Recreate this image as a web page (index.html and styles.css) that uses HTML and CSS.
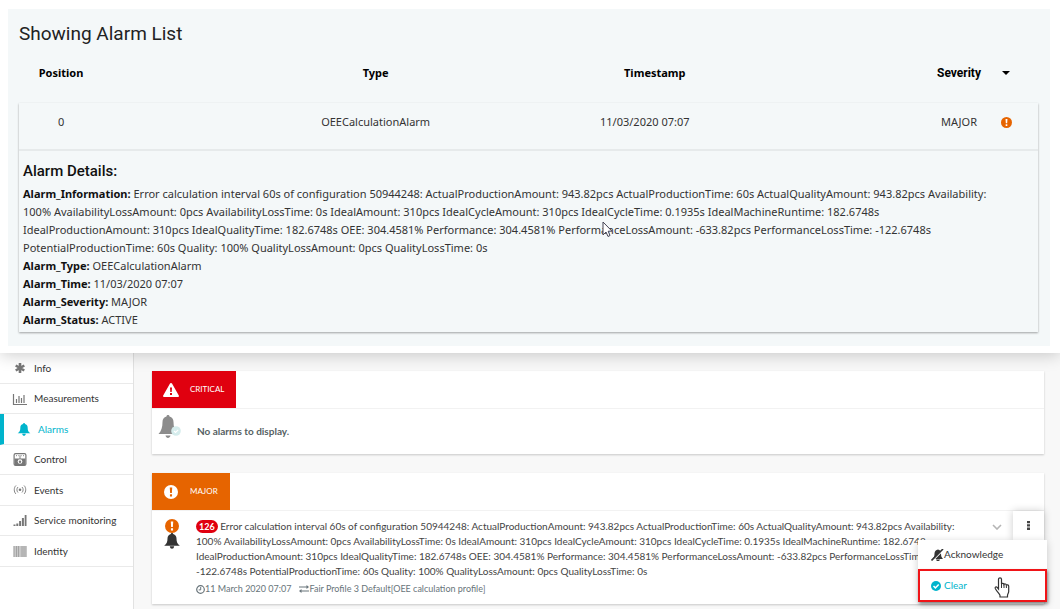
FILE: index.html
```html
<!DOCTYPE html>
<html lang="en">
<head>
<meta charset="utf-8">
<title>Alarms</title>
<link rel="stylesheet" href="styles.css">
</head>
<body>
<svg class="defs" aria-hidden="true">
  <defs>
    <symbol id="bell" viewBox="0 0 16 16"><path d="M8 0c.7 0 1.200.5 1.200 1.100 2.200.6 3.300 2.300 3.300 4.400 0 3.500.8 5.200 3.300 7.200H.2c2.500-2 3.300-3.700 3.300-7.200 0-2.100 1.100-3.800 3.300-4.400C6.800.5 7.300 0 8 0zM5.800 13.200h4.400c-.2 1.700-1.100 2.500-2.200 2.500s-2-.8-2.200-2.500z" fill="currentColor"/></symbol>
    <symbol id="alert" viewBox="0 0 16 16"><circle cx="8" cy="8" r="8" fill="currentColor"/><path d="M6.600 2.800h2.800L9 9.200H7zM6.800 10.600h2.400v2.400H6.800z" fill="var(--mark)"/></symbol>
  </defs>
</svg>

<section class="overlay">
  <div class="panel">
    <h1>Showing Alarm List</h1>
    <table>
      <thead>
        <tr>
          <th class="position">Position</th>
          <th class="type">Type</th>
          <th class="time">Timestamp</th>
          <th class="severity"><span class="sev"><span class="sev-text">Severity</span><span class="sev-icon"><svg width="8" height="4" viewBox="0 0 8 4"><path d="M0 0h8L4 4z"/></svg></span></span></th>
        </tr>
      </thead>
      <tbody>
        <tr class="summary">
          <td class="position">0</td>
          <td>OEECalculationAlarm</td>
          <td class="time">11/03/2020 07:07</td>
          <td class="severity"><span class="sev"><span class="sev-text">MAJOR</span><span class="sev-icon orange"><svg width="11" height="11"><use href="#alert"/></svg></span></span></td>
        </tr>
        <tr>
          <td colspan="4" class="details">
            <h2>Alarm Details:</h2>
            <p><b>Alarm_Information:</b> Error calculation interval 60s of configuration 50944248: ActualProductionAmount: 943.82pcs ActualProductionTime: 60s ActualQualityAmount: 943.82pcs Availability: 100% AvailabilityLossAmount: 0pcs AvailabilityLossTime: 0s IdealAmount: 310pcs IdealCycleAmount: 310pcs IdealCycleTime: 0.1935s IdealMachineRuntime: 182.6748s IdealProductionAmount: 310pcs IdealQualityTime: 182.6748s OEE: 304.4581% Performance: 304.4581% PerformanceLossAmount: -633.82pcs PerformanceLossTime: -122.6748s PotentialProductionTime: 60s Quality: 100% QualityLossAmount: 0pcs QualityLossTime: 0s</p>
            <p><b>Alarm_Type:</b> OEECalculationAlarm</p>
            <p><b>Alarm_Time:</b> 11/03/2020 07:07</p>
            <p><b>Alarm_Severity:</b> MAJOR</p>
            <p><b>Alarm_Status:</b> ACTIVE</p>
          </td>
        </tr>
      </tbody>
    </table>
  </div>
  <svg class="arrow-cursor" width="11" height="17" viewBox="0 0 11 17"><path d="M1 1v13l3-3 2 4.500 2-1L6.200 10.200H10z" fill="#fff" stroke="#445" stroke-width="1"/></svg>
</section>

<div class="app">
  <nav>
    <ul>
      <li><a href="#info"><svg width="12" height="12" viewBox="0 0 12 12"><path d="M6 1v10M1.700 3.500l8.600 5M10.300 3.500l-8.600 5" stroke="currentColor" stroke-width="2.600"/></svg><span>Info</span></a></li>
      <li><a href="#measurements"><svg width="14" height="12" viewBox="0 0 14 12"><path d="M.5 1v10.500H14M3.500 10V6M6 10V3M8.500 10V5M11 10V2" stroke="currentColor" fill="none" stroke-width="1.200"/></svg><span>Measurements</span></a></li>
      <li class="active"><a href="#alarms"><svg width="12" height="13"><use href="#bell"/></svg><span>Alarms</span></a></li>
      <li><a href="#control"><svg width="13" height="13" viewBox="0 0 13 13"><rect x=".6" y=".6" width="11.800" height="11.800" rx="1.500" fill="#fff" stroke="currentColor" stroke-width="1.200"/><path d="M1 5.500h11V12H1z" fill="currentColor"/><path d="M3 2.200v1M5.300 2.200v1M7.700 2.200v1M10 2.200v1M6.500 2.500v4" stroke="currentColor" stroke-width=".9"/><circle cx="6.500" cy="8.500" r="2.300" fill="#fff"/><circle cx="6.500" cy="8.700" r="1.200" fill="currentColor"/></svg><span>Control</span></a></li>
      <li><a href="#events"><svg width="13" height="10" viewBox="0 0 13 10"><path d="M2.500.5C.2 2.500.2 7 2.500 9M10.500.5c2.300 2 2.300 6.500 0 8.500M4.500 2C3 3.500 3 6 4.500 7.500M8.500 2C10 3.500 10 6 8.500 7.500" fill="none" stroke="currentColor" stroke-width=".9"/><circle cx="6.500" cy="4.800" r="1.300" fill="currentColor"/></svg><span>Events</span></a></li>
      <li><a href="#service"><svg width="13" height="11" viewBox="0 0 13 11"><path d="M0 9.500h2V11H0zM2.800 8.500h2V11h-2zM5.600 6h2v5h-2zM8.400 3h2v8h-2zM11.200 0h1.800v11h-1.800z" fill="currentColor"/></svg><span>Service monitoring</span></a></li>
      <li><a href="#identity"><svg width="13" height="11" viewBox="0 0 13 11"><path d="M0 0h13v11H0z" fill="#c8c8c8"/><path d="M.5 0v11M3 0v11M5 0v11M8.500 0v11M10.500 0v11M12.500 0v11" stroke="#999" stroke-width=".8"/></svg><span>Identity</span></a></li>
    </ul>
  </nav>

  <main>
    <section class="card">
      <header><h3 class="tag critical"><svg width="16" height="14" viewBox="0 0 16 14"><path d="M8 0c.5 0 .8.200 1 .6l6.800 12c.4.700 0 1.400-.8 1.400H1c-.8 0-1.200-.7-.8-1.400L7 .6C7.200.2 7.500 0 8 0z" fill="#fff"/><path d="M7 4.500h2l-.3 4.500H7.300zM7 10h2v2H7z" fill="#e0000f"/></svg>CRITICAL</h3></header>
      <div class="empty">
        <svg width="24" height="24" viewBox="0 0 24 24"><path d="M10 0c.9 0 1.500.6 1.500 1.400 2.700.7 4 2.800 4 5.500 0 5 1.200 8.600 4.500 12.100H.5c3.100-3.500 4-7.100 4-12.100 0-2.700 1.300-4.800 4-5.500C8.500.6 9.100 0 10 0zM7.500 20.500h5c-.3 1.600-1.300 2.500-2.500 2.500s-2.200-.9-2.500-2.500z" fill="#8c8c8c"/><circle cx="18" cy="16" r="4.800" fill="#d5ecec"/><path d="M16 16l1.500 1.500 2.700-2.700" fill="none" stroke="#fff" stroke-width="1.200"/></svg>
        <strong>No alarms to display.</strong>
      </div>
    </section>

    <section class="card">
      <header><h3 class="tag major"><svg width="14" height="14"><use href="#alert"/></svg>MAJOR</h3></header>
      <div class="alarm">
        <div class="state"><svg class="orange" width="14" height="14"><use href="#alert"/></svg><svg width="16" height="16"><use href="#bell"/></svg></div>
        <div class="info">
          <p><span class="badge">126</span> Error calculation interval 60s of configuration 50944248: ActualProductionAmount: 943.82pcs ActualProductionTime: 60s ActualQualityAmount: 943.82pcs Availability: 100% AvailabilityLossAmount: 0pcs AvailabilityLossTime: 0s IdealAmount: 310pcs IdealCycleAmount: 310pcs IdealCycleTime: 0.1935s IdealMachineRuntime: 182.6748s IdealProductionAmount: 310pcs IdealQualityTime: 182.6748s OEE: 304.4581% Performance: 304.4581% PerformanceLossAmount: -633.82pcs PerformanceLossTime: -122.6748s PotentialProductionTime: 60s Quality: 100% QualityLossAmount: 0pcs QualityLossTime: 0s</p>
          <div class="meta">
            <span><svg width="9" height="9" viewBox="0 0 9 9"><circle cx="4.500" cy="4.500" r="3.800" fill="none" stroke="currentColor" stroke-width="1.200"/><path d="M4.700 2v2.900H2.700" fill="none" stroke="currentColor"/></svg>11 March 2020 07:07</span>
            <span><svg width="10" height="8" viewBox="0 0 10 8"><path d="M0 2h8M2 6h8" stroke="currentColor" stroke-width="1.200"/><path d="M7.500 0L10 2 7.500 4zM2.500 4L0 6l2.500 2z" fill="currentColor"/></svg>Fair Profile 3 Default[OEE calculation profile]</span>
          </div>
        </div>
        <button class="expand" aria-label="Expand"><svg width="10" height="6" viewBox="0 0 10 6"><path d="M1 1l4 4 4-4" fill="none" stroke="#b5b5b5" stroke-width="1.600"/></svg></button>
        <button class="more" aria-label="Actions"><svg width="3" height="9" viewBox="0 0 3 9"><path d="M0 0h3v2.300H0zM0 3.300h3v2.300H0zM0 6.600h3v2.300H0z" fill="#444"/></svg></button>
        <div class="menu">
          <button><svg width="13" height="12" viewBox="0 0 13 12"><path d="M7 .5c2 .3 3 1.800 3 4 0 2.500.6 4 2 5.500H1.500C3 8.500 3.500 7 3.500 4.500 3.500 2.300 5 .8 7 .5zM5 10.500h4c-.3 1-1 1.500-2 1.500s-1.700-.5-2-1.500z" fill="#333"/><path d="M1.500 12L13 .5" stroke="#fff" stroke-width="1.200"/><path d="M.5 11.500L12 0" stroke="#333" stroke-width="1.600"/></svg>Acknowledge</button>
          <button class="clear"><svg width="10" height="10" viewBox="0 0 10 10"><circle cx="5" cy="5" r="5" fill="currentColor"/><path d="M2.500 5l1.900 1.900L7.700 3.500" fill="none" stroke="#fff" stroke-width="1.500"/></svg>Clear</button>
          <svg class="hand-cursor" width="16" height="21" viewBox="0 0 16 21"><path d="M4.500 12V2.200C4.500.300 7.500.300 7.500 2.200V7c.5-1 2.400-.8 2.500.4.600-.8 2.300-.5 2.400.7.700-.6 2.300-.3 2.300 1.200v5.200c0 1.500-1.200 2.500-1.200 4V20H6v-1.500c0-1-3-3.700-4.700-7C.600 10 2.300 9.300 3.200 10.300z" fill="#fff" stroke="#333" stroke-width="1.200"/><path d="M7.500 7v4M10 7.500V11M12.400 8.500V11" stroke="#333"/></svg>
        </div>
      </div>
    </section>
  </main>
</div>
</body>
</html>
```
FILE: styles.css
```css
* { box-sizing: border-box; }

body {
  --mark: #fff;
  margin: 0;
  min-height: 100vh;
  display: flex;
  flex-direction: column;
  background: #fff;
  color: #333;
  font: 11px/18px "Noto Sans", sans-serif;
}

h1, h2, h3, p, ul { margin: 0; padding: 0; }
button { border: 0; padding: 0; background: none; font: inherit; color: inherit; }
svg { flex: none; }
.defs { position: absolute; width: 0; height: 0; }
.orange { color: #e66400; }

/* Alarm list overlay */
.overlay {
  position: relative;
  z-index: 1;
  padding: 9px 10px 7px 8px;
  background: #fff;
  box-shadow: 0 2px 16px rgba(0, 0, 0, .2);
}
.panel { padding: 13px 12px 14px 11px; background: #f4f8f9; }
h1 { font: 400 19px/24px Roboto, sans-serif; color: #222; }
table { width: 100%; table-layout: fixed; border-collapse: separate; border-spacing: 0; }
th, td { padding: 0; text-align: center; }
th { height: 57px; padding-bottom: 4px; color: #000; font-weight: 700; }
th.position { width: 22%; }
th.type { width: 26%; }
th.time { width: 28%; }
.position { padding-right: 140px; }
.time { padding-left: 8px; }
td.time { padding: 0 12px 0 0; }
.severity { padding-right: 24px; }
th.severity { font-family: Roboto, sans-serif; font-size: 12px; }
.sev { display: flex; justify-content: flex-end; align-items: center; gap: 12px; }
.sev-text { width: 54px; }
.sev-icon { width: 16px; display: flex; justify-content: center; }
tbody { box-shadow: 0 1px 2px rgba(0, 0, 0, .35); }
.summary td { height: 48px; padding-top: 0; padding-bottom: 8px; border-bottom: 2px solid #e6eaeb; }
.details { padding: 10px 48px 3px 4px; text-align: left; }
h2 { margin-bottom: 4px; font: 500 15px/20px Roboto, sans-serif; color: #111; }
b { color: #111; }
.arrow-cursor { position: absolute; left: 602px; top: 221px; }

/* Device page */
.app {
  flex: 1;
  display: flex;
  background: #f8f8f8;
  font: 10px/15px Lato, sans-serif;
}
nav { width: 134px; flex: none; background: #fff; border-right: 1px solid #e2e2e2; }
ul { list-style: none; }
li { height: 31px; border-bottom: 1px solid #eaeaea; }
li:nth-child(even) { height: 30px; }
li a {
  height: 100%;
  display: flex;
  align-items: center;
  gap: 6px;
  padding-left: 12px;
  color: #333;
  text-decoration: none;
}
li svg { width: 16px; color: #777; }
.active { border-left: 4px solid #00b4cc; }
.active a { color: #00b4cc; }
.active svg { color: #00b4cc; }

main { flex: 1; display: flex; flex-direction: column; gap: 19px; padding: 18px 16px 4px 18px; }
.card { background: #fff; box-shadow: 0 1px 2px rgba(0, 0, 0, .2); }
.card header { display: flex; border-bottom: 1px solid #f2f2f2; }
.tag {
  display: flex;
  align-items: center;
  gap: 11px;
  height: 37px;
  padding: 0 12px 0 11px;
  color: #fff;
  font: 400 8px/15px Lato, sans-serif;
}
.tag svg { width: 16px; }
.critical { background: #e0000f; }
.major { --mark: #e66400; background: #e66400; }
.empty { display: flex; align-items: flex-end; gap: 15px; padding: 6px 6px 15px; color: #565f63; }

.alarm { position: relative; display: flex; }
.state { display: flex; flex-direction: column; align-items: center; width: 44px; padding: 8px 4px 0 0; }
.info { flex: 1; padding: 8px 10px 8px 0; color: #444; }
.badge { padding: 1px 3px; border-radius: 8px; background: #e0000f; color: #fff; font-weight: 700; font-size: 9px; }
.meta { display: flex; gap: 8px; padding-top: 3px; color: #68747a; font-size: 9px; line-height: 14px; }
.meta span { display: flex; align-items: center; }
.expand { width: 32px; height: 30px; }
.more { width: 31px; height: 30px; background: #fff; box-shadow: 0 0 8px rgba(0, 0, 0, .2); }
.menu {
  position: absolute;
  top: 29px;
  right: -3px;
  width: 129px;
  background: #fff;
  box-shadow: 0 2px 8px rgba(0, 0, 0, .2);
}
.menu button {
  display: flex;
  align-items: center;
  width: 100%;
  height: 29px;
  padding-left: 13px;
}
.menu .clear {
  height: 33px;
  gap: 3px;
  padding-left: 11px;
  border: 2px solid #f01418;
  color: #00b4cc;
  box-shadow: 1px 2px 3px rgba(0, 0, 0, .4);
}
.hand-cursor { position: absolute; left: 76px; top: 37px; }
```
